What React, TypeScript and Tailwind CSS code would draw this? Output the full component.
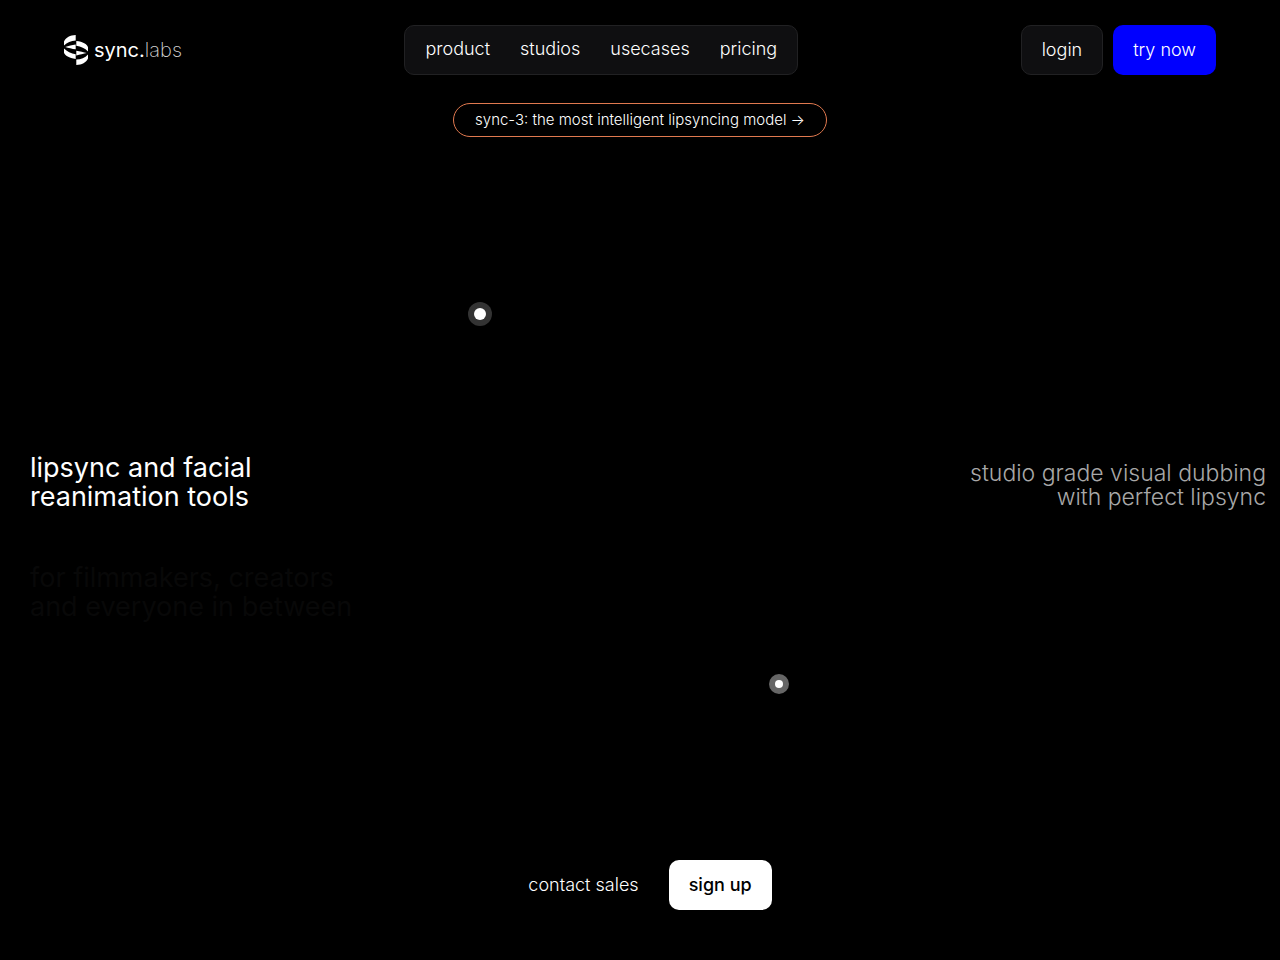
const navLinks = ['product', 'studios', 'usecases', 'pricing']

function LogoMark() {
  return (
    <svg viewBox="0 0 24 32" className="h-8 w-6" fill="currentColor" aria-hidden="true">
      <g id="half">
        <path d="M0 7.500C2 3.500 6 1.200 11.700 1V6.400C7 6.600 3 8.200 0 11.500Z" />
        <path d="M1.200 12.900C4.500 12.200 8 11 11.700 10.600V15.200C8 14.800 4.500 13.700 1.200 12.900Z" />
        <path d="M0 14.600C3 17.600 7 19.600 11.700 20.200V24.900C5 24.200 1 21.600 0 18.800Z" />
      </g>
      <use href="#half" transform="rotate(180 12 16)" />
    </svg>
  )
}

function Header() {
  return (
    <header className="flex items-center justify-between px-16 pt-[25px]">
      <a href="#" className="flex items-center gap-1.5 text-white">
        <LogoMark />
        <span className="text-xl leading-6">
          sync.<span className="font-extralight text-neutral-300">labs</span>
        </span>
      </a>

      <nav className="flex h-[50px] items-center gap-[30px] rounded-[10px] border border-[#212123] bg-[#0f0f11] px-5 pb-0.5">
        {navLinks.map((link) => (
          <a key={link} href="#" className="text-lg leading-6 font-light text-white">
            {link}
          </a>
        ))}
      </nav>

      <div className="flex gap-2.5">
        <a href="#" className="flex h-[50px] items-center rounded-[10px] border border-[#212123] bg-[#0f0f11] px-5 text-lg font-light text-white">
          login
        </a>
        <a href="#" className="flex h-[50px] items-center rounded-[10px] bg-[#0000ff] px-5 text-lg font-light text-white">
          try now
        </a>
      </div>
    </header>
  )
}

export default function App() {
  return (
    <div className="relative flex min-h-screen flex-col overflow-hidden bg-black font-['Inter','Liberation_Sans',sans-serif] text-white">
      <Header />

      <a href="#" className="mt-7 flex h-[34px] items-center self-center rounded-full border border-[#e0794f] px-[21px] text-[15px] font-light">
        sync-3: the most intelligent lipsyncing model →
      </a>

      <main className="flex flex-1 items-start justify-between pt-79 pr-3.5 pl-[30px]">
        <div className="text-[27px] leading-[29px]">
          <h1>
            lipsync and facial
            <br />
            reanimation tools
          </h1>
          <p className="mt-[52px] text-[#080808]">
            for filmmakers, creators
            <br />
            and everyone in between
          </p>
        </div>
        <p className="mt-2 text-right text-[23px] leading-6 font-light text-[#a8a8a8]">
          studio grade visual dubbing
          <br />
          with perfect lipsync
        </p>
      </main>

      {/* floating hotspots */}
      <span className="absolute top-[302px] left-[468px] flex size-6 items-center justify-center rounded-full bg-[#333]">
        <span className="size-3 rounded-full bg-white" />
      </span>
      <span className="absolute top-[674px] left-[769px] flex size-5 items-center justify-center rounded-full bg-[#666]">
        <span className="size-2 rounded-full bg-white" />
      </span>

      <div className="flex items-center justify-center gap-2.5 pb-[50px] text-lg">
        <a href="#" className="px-5 font-light">
          contact sales
        </a>
        <a href="#" className="flex h-[50px] items-center rounded-[10px] bg-white px-5 font-medium text-black">
          sign up
        </a>
      </div>
    </div>
  )
}
